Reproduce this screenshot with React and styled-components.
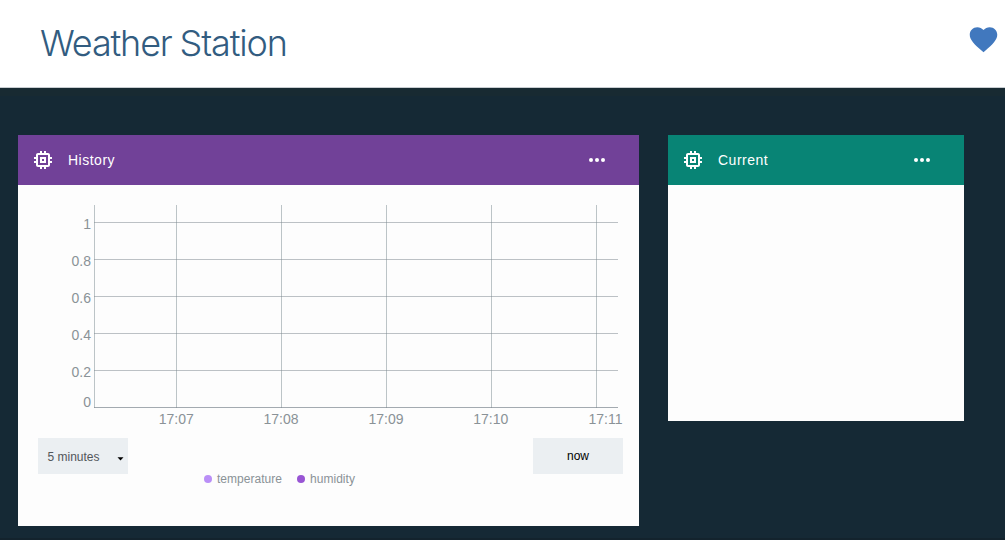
import React from "react";
import styled, { createGlobalStyle } from "styled-components";

const GlobalStyle = createGlobalStyle`
  * { box-sizing: border-box; }
  body {
    margin: 0;
    background: #152935;
    font-family: "Liberation Sans", Arial, sans-serif;
  }
`;

const Page = styled.div`
  height: 540px;
  overflow: hidden;
  background: #152935;
  border-bottom: 2px solid #13232d;
`;

const Header = styled.header`
  display: flex;
  justify-content: space-between;
  align-items: flex-start;
  height: 88px;
  padding: 23px 5px 0 40px;
  background: #fff;
  border-bottom: 1px solid #c8cdd1;
`;

const Title = styled.h1`
  margin: -4px 0 0;
  font-family: Inter, "Liberation Sans", sans-serif;
  font-size: 36px;
  font-weight: 300;
  line-height: 48px;
  letter-spacing: -1.15px;
  word-spacing: -1px;
  white-space: nowrap;
  color: #325c80;
`;

const HeartIcon = styled.svg`
  display: block;
  width: 33px;
  height: 33px;
  fill: #4178be;
`;

const Shade = styled.div`
  height: 8px;
  background: #182a32;
`;

const Board = styled.main`
  display: flex;
  align-items: flex-start;
  gap: 29px;
  padding: 39px 0 0 18px;
`;

const Card = styled.section`
  width: ${(p) => p.$width}px;
  height: ${(p) => p.$height}px;
  flex: none;
  background: #fdfdfd;
`;

const CardHeader = styled.header`
  display: flex;
  align-items: center;
  height: 50px;
  padding: 0 34px 0 13px;
  background: ${(p) => p.$color};
  color: #fff;
`;

const CardTitle = styled.h2`
  flex: 1;
  margin: 0 0 0 13px;
  font-size: 14px;
  font-weight: 400;
  letter-spacing: 0.5px;
`;

const ChipSvg = styled.svg`
  display: block;
  width: 24px;
  height: 24px;
  fill: #fff;
`;

const DotsSvg = styled.svg`
  display: block;
  width: 16px;
  height: 4px;
  fill: #fff;
`;

const Plot = styled.svg`
  display: block;
  width: 621px;
  height: 253px;
`;

const AxisLabel = styled.text`
  font-family: "Liberation Sans", Arial, sans-serif;
  font-size: 14px;
  fill: #8a9297;
`;

const Controls = styled.div`
  display: flex;
  justify-content: space-between;
  padding: 0 16px 0 20px;
`;

const Control = styled.button`
  display: flex;
  align-items: center;
  justify-content: ${(p) => (p.$select ? "space-between" : "center")};
  width: 90px;
  height: 36px;
  padding: ${(p) => (p.$select ? "2px 4px 0 9.5px" : "0")};
  border: 0;
  background: #ebeff2;
  color: ${(p) => (p.$select ? "#52565a" : "#000")};
  font: 12px "Liberation Sans", Arial, sans-serif;
`;

const Caret = styled.svg`
  width: 7px;
  height: 4px;
  margin-top: 4px;
  fill: #000;
`;

const Legend = styled.ul`
  display: flex;
  gap: 15px;
  margin: -2px 0 0 186px;
  padding: 0;
  list-style: none;
`;

const LegendItem = styled.li`
  display: flex;
  align-items: center;
  gap: 5px;
  font-size: 12px;
  line-height: 14px;
  letter-spacing: 0.03px;
  color: #8a9297;

  &::before {
    content: "";
    width: 8px;
    height: 8px;
    border-radius: 50%;
    background: ${(p) => p.$color};
  }
`;

const rows = [
  { y: 37, label: "1", base: 44 },
  { y: 74, label: "0.8", base: 81 },
  { y: 111, label: "0.6", base: 118 },
  { y: 148, label: "0.4", base: 155 },
  { y: 185, label: "0.2", base: 192 },
  { y: 222, label: "0", base: 222 },
];

const columns = [
  { x: 158, label: "17:07", center: 158.2 },
  { x: 263, label: "17:08", center: 263 },
  { x: 368, label: "17:09", center: 368 },
  { x: 473, label: "17:10", center: 472.8 },
  { x: 578, label: "17:11", center: 587.5 },
];

function Chart() {
  return (
    <Plot viewBox="0 0 621 253">
      <g fill="#7c8b92" fillOpacity="0.5">
        <rect x="76" y="20" width="1" height="203" />
        {columns.map((c) => (
          <rect key={c.x} x={c.x} y="20" width="1" height="203" />
        ))}
      </g>
      <g fill="#7c868e">
        {rows.map((r) => (
          <rect
            key={r.y}
            x="76"
            y={r.y}
            width="524"
            height="1"
            fillOpacity={r.label === "0" ? 0.7 : 0.5}
          />
        ))}
      </g>
      {rows.map((r) => (
        <AxisLabel key={r.label} x="73" y={r.base} textAnchor="end">
          {r.label}
        </AxisLabel>
      ))}
      {columns.map((c) => (
        <AxisLabel key={c.label} x={c.center} y="239" textAnchor="middle">
          {c.label}
        </AxisLabel>
      ))}
    </Plot>
  );
}

function Panel({ title, color, width, height, children }) {
  return (
    <Card $width={width} $height={height}>
      <CardHeader $color={color}>
        <ChipSvg viewBox="0 0 24 24">
          <path d="M15 9H9v6h6V9zm-2 4h-2v-2h2v2zm8-2V9h-2V7c0-1.1-.9-2-2-2h-2V3h-2v2h-2V3H9v2H7c-1.1 0-2 .9-2 2v2H3v2h2v2H3v2h2v2c0 1.1.9 2 2 2h2v2h2v-2h2v2h2v-2h2c1.1 0 2-.9 2-2v-2h2v-2h-2v-2h2zm-4 6H7V7h10v10z" />
        </ChipSvg>
        <CardTitle>{title}</CardTitle>
        <DotsSvg viewBox="0 0 16 4">
          <circle cx="2" cy="2" r="2" />
          <circle cx="8" cy="2" r="2" />
          <circle cx="14" cy="2" r="2" />
        </DotsSvg>
      </CardHeader>
      {children}
    </Card>
  );
}

export default function App() {
  return (
    <>
      <GlobalStyle />
      <Page>
        <Header>
          <Title>Weather Station</Title>
          <HeartIcon viewBox="0 0 24 24">
            <path d="M12 21.35l-1.45-1.32C5.4 15.36 2 12.28 2 8.5 2 5.42 4.42 3 7.5 3c1.74 0 3.41.81 4.5 2.09C13.09 3.81 14.76 3 16.5 3 19.58 3 22 5.42 22 8.5c0 3.78-3.4 6.86-8.55 11.54L12 21.35z" />
          </HeartIcon>
        </Header>
        <Shade />
        <Board>
          <Panel title="History" color="#714198" width={621} height={391}>
            <Chart />
            <Controls>
              <Control $select>
                5 minutes
                <Caret viewBox="0 0 7 4">
                  <path d="M0.5 0.3h6L3.5 3.5z" />
                </Caret>
              </Control>
              <Control>now</Control>
            </Controls>
            <Legend>
              <LegendItem $color="#ba8ff7">temperature</LegendItem>
              <LegendItem $color="#9855d4">humidity</LegendItem>
            </Legend>
          </Panel>
          <Panel title="Current" color="#088475" width={296} height={286} />
        </Board>
      </Page>
    </>
  );
}
